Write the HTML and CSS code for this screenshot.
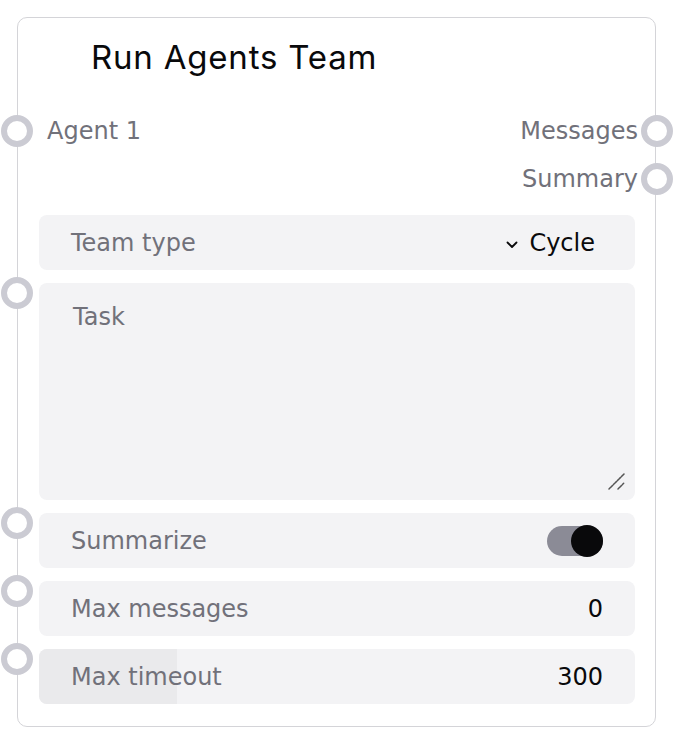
FILE: index.html
```html
<!DOCTYPE html>
<html>
<head>
<meta charset="utf-8">
<link rel="stylesheet" href="styles.css">
</head>
<body>
<div class="card">
  <div class="title">Run Agents Team</div>
  <div class="io">
    <div class="io-col">
      <div class="io-item"><span class="handle handle-in"></span>Agent 1</div>
    </div>
    <div class="io-col io-right">
      <div class="io-item"><span class="handle handle-out"></span>Messages</div>
      <div class="io-item io-second"><span class="handle handle-out"></span>Summary</div>
    </div>
  </div>
  <div class="fields">
    <div class="field">
      <span class="label">Team type</span>
      <span class="select">
        <svg class="chev" width="12" height="8" viewBox="0 0 12 8"><path d="M1.5 1.5l4.5 4.5 4.5-4.5" fill="none" stroke="#09090b" stroke-width="1.8" stroke-linecap="round" stroke-linejoin="round"/></svg>
        <span class="value">Cycle</span>
      </span>
    </div>
    <div class="field field-area">
      <span class="handle handle-field"></span>
      <span class="placeholder">Task</span>
      <svg class="grip" width="18" height="18" viewBox="0 0 18 18"><path d="M2 17L17 2M11 17l6-6" stroke="#555" stroke-width="1.5" stroke-linecap="round" stroke-dasharray="2 1"/></svg>
    </div>
    <div class="field">
      <span class="handle handle-field"></span>
      <span class="label">Summarize</span>
      <span class="toggle"><span class="knob"></span></span>
    </div>
    <div class="field">
      <span class="handle handle-field"></span>
      <span class="label">Max messages</span>
      <span class="value">0</span>
    </div>
    <div class="field">
      <span class="handle handle-field"></span>
      <span class="fill" style="width: 138px"></span>
      <span class="label">Max timeout</span>
      <span class="value">300</span>
    </div>
  </div>
</div>
</body>
</html>
```

FILE: styles.css
```css
html, body {
  margin: 0;
  padding: 0;
  background: #ffffff;
}

body {
  font-family: "DejaVu Sans", sans-serif;
  font-size: 24px;
}

.card {
  box-sizing: border-box;
  margin: 17px 0 0 17px;
  width: 639px;
  height: 710px;
  border: 1px solid #d4d4d8;
  border-radius: 10px;
  background: #ffffff;
  padding: 19px 20px 0 21px;
  display: flex;
  flex-direction: column;
  position: relative;
}

.title {
  font-family: "Inter", "Liberation Sans", sans-serif;
  font-size: 33px;
  letter-spacing: 0.8px;
  line-height: 40px;
  height: 40px;
  color: #09090b;
  padding-left: 52px;
}

.io {
  margin: 40px -3px 0 8px;
  display: flex;
  justify-content: space-between;
  color: #71717a;
}

.io-col {
  display: flex;
  flex-direction: column;
}

.io-right {
  align-items: flex-end;
}

.io-item {
  position: relative;
  line-height: 28px;
  height: 28px;
}

.io-second {
  margin-top: 20px;
}

.handle {
  position: absolute;
  box-sizing: border-box;
  width: 32px;
  height: 32px;
  border: 6px solid #cbcbd3;
  border-radius: 50%;
  background: #ffffff;
}

.handle-in {
  left: -46px;
  top: -2px;
}

.handle-out {
  right: -35px;
  top: -2px;
}

.handle-field {
  left: -38px;
  top: -6px;
}

.fields {
  margin-top: 22px;
  display: flex;
  flex-direction: column;
  gap: 13px;
}

.field {
  position: relative;
  box-sizing: border-box;
  height: 55px;
  background: #f3f3f5;
  border-radius: 8px;
  padding: 0 32px;
  display: flex;
  align-items: center;
  justify-content: space-between;
}

.label {
  color: #71717a;
  position: relative;
}

.value {
  color: #09090b;
  position: relative;
}

.select {
  display: flex;
  align-items: center;
  gap: 11px;
  margin-right: 8px;
}

.chev {
  display: block;
  margin-top: 4px;
}

.field-area {
  height: 217px;
  align-items: flex-start;
  padding: 20px 34px;
}

.placeholder {
  color: #71717a;
  line-height: 28px;
}

.grip {
  position: absolute;
  right: 10px;
  bottom: 10px;
}

.toggle {
  position: relative;
  width: 56px;
  height: 30px;
  border-radius: 15px;
  background: #8b8b96;
}

.knob {
  position: absolute;
  right: 0;
  top: -1px;
  width: 32px;
  height: 32px;
  border-radius: 50%;
  background: #09090b;
}

.fill {
  position: absolute;
  left: 0;
  top: 0;
  bottom: 0;
  background: #eaeaec;
  border-radius: 8px 0 0 8px;
}
```
